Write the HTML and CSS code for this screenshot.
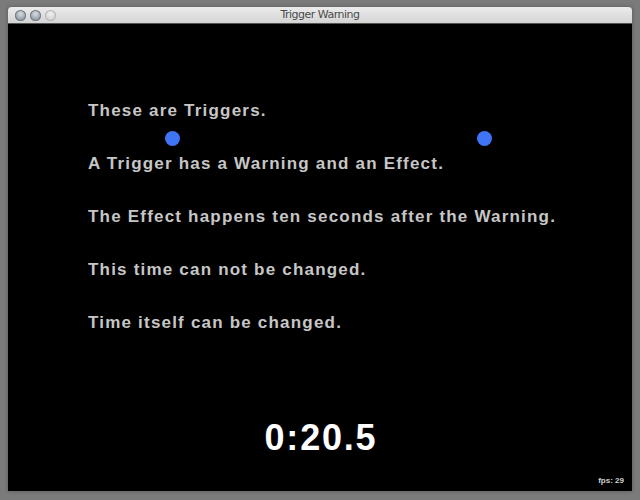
FILE: index.html
```html
<!DOCTYPE html>
<html>
<head>
<meta charset="utf-8">
<link rel="stylesheet" href="styles.css">
</head>
<body>
<div class="window">
  <div class="titlebar">
    <div class="lights">
      <span class="light"></span>
      <span class="light"></span>
      <span class="light dim"></span>
    </div>
    <div class="title">Trigger Warning</div>
  </div>
  <div class="canvas">
    <div class="lines">
      <p class="line">These are Triggers.</p>
      <p class="line">A Trigger has a Warning and an Effect.</p>
      <p class="line">The Effect happens ten seconds after the Warning.</p>
      <p class="line">This time can not be changed.</p>
      <p class="line">Time itself can be changed.</p>
    </div>
    <span class="dot dot-a"></span>
    <span class="dot dot-b"></span>
    <div class="timer">0:20.5</div>
    <div class="fps">fps: 29</div>
  </div>
</div>
</body>
</html>
```
FILE: styles.css
```css
html, body {
  margin: 0;
  padding: 0;
}
body {
  width: 640px;
  height: 500px;
  background: #7b7b7b;
  overflow: hidden;
  font-family: "Liberation Sans", Arial, sans-serif;
}
.window {
  margin: 7px 8px 0 8px;
  width: 624px;
  height: 484px;
  display: flex;
  flex-direction: column;
  box-shadow: 0 0 4px rgba(0,0,0,0.3);
}
.titlebar {
  position: relative;
  height: 16px;
  flex: none;
  border-radius: 4px 4px 0 0;
  background: linear-gradient(#ececec, #d4d4d4);
  border-bottom: 1px solid #555;
  display: flex;
  align-items: center;
}
.lights {
  display: flex;
  gap: 4px;
  padding-left: 7px;
}
.light {
  width: 11px;
  height: 11px;
  border-radius: 50%;
  background: radial-gradient(circle at 50% 35%, #d8dde3 0%, #9aa3ad 60%, #7d8690 100%);
  box-shadow: inset 0 0 0 1px #737b84;
}
.light.dim {
  background: radial-gradient(circle at 50% 35%, #f0f0f0 0%, #d2d2d2 70%, #c2c2c2 100%);
  box-shadow: inset 0 0 0 1px #b5b5b5;
}
.title {
  position: absolute;
  left: 0;
  right: 0;
  top: 0;
  line-height: 16px;
  text-align: center;
  font-size: 11px;
  color: #4a4a4a;
  font-family: "DejaVu Sans", sans-serif;
  letter-spacing: -0.5px;
}
.canvas {
  position: relative;
  flex: 1;
  background: #000;
}
.lines {
  display: flex;
  flex-direction: column;
  gap: 32px;
  padding: 76px 0 0 80px;
}
.line {
  margin: 0;
  font-size: 17px;
  line-height: 21px;
  font-weight: bold;
  color: #c6c6c6;
  letter-spacing: 1.2px;
}
.dot {
  position: absolute;
  width: 15px;
  height: 15px;
  border-radius: 50%;
  background: #3f74f6;
  top: 107px;
}
.dot-a { left: 157px; }
.dot-b { left: 469px; }
.timer {
  position: absolute;
  left: 0;
  right: 0;
  top: 394px;
  padding-left: 2px;
  text-align: center;
  font-size: 36px;
  line-height: 40px;
  font-weight: bold;
  color: #fff;
  letter-spacing: 1.8px;
}
.fps {
  position: absolute;
  right: 8px;
  bottom: 6px;
  font-size: 8px;
  font-weight: bold;
  color: #d0d0d0;
}
```
